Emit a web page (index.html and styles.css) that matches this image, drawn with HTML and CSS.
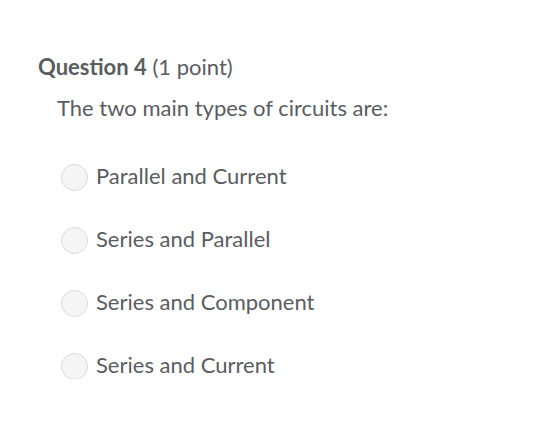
FILE: index.html
```html
<!DOCTYPE html>
<html>
<head>
<meta charset="utf-8">
<link rel="stylesheet" href="styles.css">
</head>
<body>
<div class="question">
  <h2 class="q-title"><span class="q-num">Question 4</span> (1 point)</h2>
  <div class="q-body">
    <p class="q-text">The two main types of circuits are:</p>
    <ul class="options">
      <li class="option"><span class="radio"></span><span class="label">Parallel and Current</span></li>
      <li class="option"><span class="radio"></span><span class="label">Series and Parallel</span></li>
      <li class="option"><span class="radio"></span><span class="label">Series and Component</span></li>
      <li class="option"><span class="radio"></span><span class="label">Series and Current</span></li>
    </ul>
  </div>
</div>
</body>
</html>
```
FILE: styles.css
```css
html, body {
  margin: 0;
  padding: 0;
  background: #ffffff;
}
body {
  font-family: Lato, "Open Sans", sans-serif;
  color: #5a5d5f;
}
.question {
  padding: 53px 0 0 38px;
}
.q-title {
  margin: 0;
  font-size: 22px;
  line-height: 28px;
  font-weight: 400;
}
.q-num {
  font-weight: 700;
}
.q-body {
  padding-left: 19px;
}
.q-text {
  margin: 13px 0 0 0;
  font-size: 22px;
  line-height: 28px;
}
.options {
  list-style: none;
  margin: 40px 0 0 0;
  padding: 0;
  display: flex;
  flex-direction: column;
  gap: 35px;
}
.option {
  display: flex;
  align-items: center;
  height: 28px;
}
.radio {
  box-sizing: border-box;
  width: 27px;
  height: 27px;
  border-radius: 50%;
  border: 1px solid #d9dadb;
  background: #f5f5f5;
  margin: 3px 8px 0 4px;
  flex: none;
}
.label {
  font-size: 22px;
  line-height: 28px;
}
```
